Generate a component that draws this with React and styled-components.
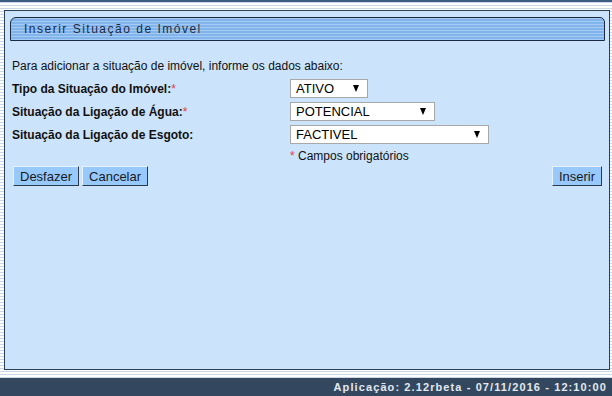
import React from 'react'
import styled, { createGlobalStyle } from 'styled-components'

var GlobalStyle = createGlobalStyle`
  html, body {
    margin: 0;
    padding: 0;
    width: 612px;
    height: 396px;
    overflow: hidden;
    font-family: "Liberation Sans", Arial, sans-serif;
  }
`

var Page = styled.div`
  width: 612px;
  height: 396px;
  display: flex;
  flex-direction: column;
  background: repeating-linear-gradient(
    to bottom,
    #ffffff 0px,
    #ffffff 2px,
    #c9d9e8 2px,
    #c9d9e8 3px
  );
`

var TopRule = styled.div`
  height: 2px;
  background: #3d5c82;
`

var Main = styled.div`
  flex: 1;
  display: flex;
  padding: 8px 2px 8px 4px;
`

var Panel = styled.div`
  flex: 1;
  display: flex;
  flex-direction: column;
  background: #cbe3fb;
  border: 1px solid #2b3f55;
  padding: 6px 4px 0 5px;
`

var TitleTab = styled.div`
  height: 22px;
  display: flex;
  align-items: center;
  padding-left: 13px;
  border: 1px solid #1b2a3e;
  border-radius: 6px 5px 0 0;
  background: repeating-linear-gradient(
    to bottom,
    #a5cbf4 0px,
    #a5cbf4 1px,
    #82b4ec 1px,
    #82b4ec 3px
  );
  color: #1d2c44;
  font-size: 12px;
  letter-spacing: 1.5px;
`

var Intro = styled.p`
  margin: 18px 0 0 2px;
  font-size: 12px;
  color: #111;
`

var Form = styled.div`
  display: grid;
  grid-template-columns: 278px auto;
  row-gap: 4px;
  margin: 6px 0 0 2px;
  align-items: center;
`

var Label = styled.span`
  font-size: 12px;
  font-weight: bold;
  color: #111;
`

var Star = styled.span`
  color: #e0404a;
  font-weight: normal;
`

var Select = styled.div`
  width: ${props => props.width}px;
  height: 19px;
  box-sizing: border-box;
  display: flex;
  align-items: center;
  justify-content: space-between;
  padding: 0 8px 0 5px;
  background: #fff;
  border: 1px solid #a8a8a8;
  font-size: 13px;
  color: #000;
  &::after {
    content: '';
    border-left: 3.5px solid transparent;
    border-right: 3.5px solid transparent;
    border-top: 7px solid #000;
  }
`

var Note = styled.div`
  font-size: 12px;
  color: #111;
  margin-top: 1px;
`

var ButtonBar = styled.div`
  display: flex;
  gap: 3px;
  margin: 3px 3px 0 3px;
`

var Button = styled.button`
  height: 20px;
  padding: 0 6px;
  font-family: "Liberation Sans", Arial, sans-serif;
  font-size: 13px;
  color: #1a1a1a;
  background: #97c9fd;
  border: 1px solid;
  border-color: #e8f2fc #2a3a4c #2a3a4c #e8f2fc;
  margin-left: ${props => (props.right ? 'auto' : '0')};
`

var Footer = styled.div`
  height: 18px;
  background: #33485f;
  display: flex;
  align-items: center;
  justify-content: flex-end;
  padding-right: 5px;
  color: #e3e9f0;
  font-size: 11px;
  font-weight: bold;
  letter-spacing: 1.1px;
`

var fields = [
  { label: 'Tipo da Situação do Imóvel:', required: true, value: 'ATIVO', width: 78 },
  { label: 'Situação da Ligação de Água:', required: true, value: 'POTENCIAL', width: 145 },
  { label: 'Situação da Ligação de Esgoto:', required: false, value: 'FACTIVEL', width: 199 }
]

export default function App () {
  return (
    <Page>
      <GlobalStyle />
      <TopRule />
      <Main>
        <Panel>
          <TitleTab>Inserir Situação de Imóvel</TitleTab>
          <Intro>Para adicionar a situação de imóvel, informe os dados abaixo:</Intro>
          <Form>
            {fields.map(f => (
              <React.Fragment key={f.label}>
                <Label>
                  {f.label}
                  {f.required && <Star>*</Star>}
                </Label>
                <Select width={f.width}>{f.value}</Select>
              </React.Fragment>
            ))}
            <span />
            <Note><Star>*</Star> Campos obrigatórios</Note>
          </Form>
          <ButtonBar>
            <Button>Desfazer</Button>
            <Button>Cancelar</Button>
            <Button right>Inserir</Button>
          </ButtonBar>
        </Panel>
      </Main>
      <Footer>Aplicação: 2.12rbeta - 07/11/2016 - 12:10:00</Footer>
    </Page>
  )
}
